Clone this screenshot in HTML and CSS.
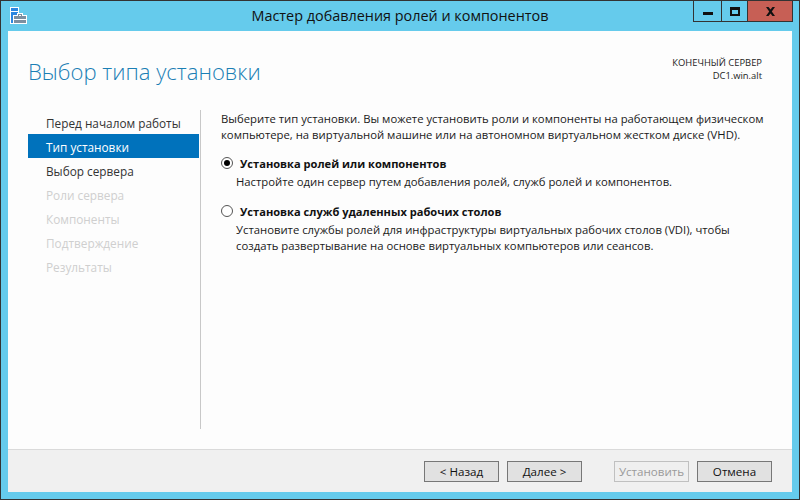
FILE: index.html
```html
<!DOCTYPE html>
<html lang="ru">
<head>
    <meta charset="UTF-8">
    <title>Мастер добавления ролей и компонентов</title>
    <link rel="stylesheet" href="styles.css">
</head>
<body>
    <div class="window">
        <div class="titlebar">
            <svg class="app-icon" width="17" height="17" viewBox="0 0 17 17">
                <rect x="0" y="0" width="9" height="17" fill="#fff"/>
                <rect x="1" y="1" width="7" height="3" fill="#2b86e0"/>
                <rect x="1" y="5" width="7" height="11" fill="#2b86e0"/>
                <rect x="3" y="8" width="14" height="9" fill="#fff"/>
                <rect x="7" y="6" width="6" height="3" fill="#fff"/>
                <rect x="8" y="7" width="4" height="2" fill="#7d8fa0"/>
                <rect x="9" y="8" width="2" height="1" fill="#fff"/>
                <rect x="4" y="9" width="12" height="7" fill="#7d8fa0"/>
                <rect x="4" y="12" width="12" height="1" fill="#fff"/>
            </svg>
            <div class="title">Мастер добавления ролей и компонентов</div>
            <div class="controls">
                <div class="ctl ctl-min"><span class="min-glyph"></span></div>
                <div class="ctl ctl-max"><span class="max-glyph"></span></div>
                <div class="ctl ctl-close">
                    <svg width="11" height="9" viewBox="0 0 11 9"><path d="M1 0h2.500L5.500 2.500 7.500 0H10L6.800 4.500 10 9H7.500L5.500 6.500 3.500 9H1L4.200 4.500Z" fill="#111"/></svg>
                </div>
            </div>
        </div>

        <div class="client">
            <div class="header">
                <h1>Выбор типа установки</h1>
                <div class="target">
                    <div>КОНЕЧНЫЙ СЕРВЕР</div>
                    <div>DC1.win.alt</div>
                </div>
            </div>

            <div class="main">
                <ul class="steps">
                    <li>Перед началом работы</li>
                    <li class="active">Тип установки</li>
                    <li>Выбор сервера</li>
                    <li class="disabled">Роли сервера</li>
                    <li class="disabled">Компоненты</li>
                    <li class="disabled">Подтверждение</li>
                    <li class="disabled">Результаты</li>
                </ul>
                <div class="content">
                    <p class="intro">Выберите тип установки. Вы можете установить роли и компоненты на работающем физическом<br>компьютере, на виртуальной машине или на автономном виртуальном жестком диске (VHD).</p>
                    <div class="option">
                        <div class="option-head"><span class="radio checked"></span><b>Установка ролей или компонентов</b></div>
                        <p>Настройте один сервер путем добавления ролей, служб ролей и компонентов.</p>
                    </div>
                    <div class="option">
                        <div class="option-head"><span class="radio"></span><b>Установка служб удаленных рабочих столов</b></div>
                        <p>Установите службы ролей для инфраструктуры виртуальных рабочих столов (VDI), чтобы<br>создать развертывание на основе виртуальных компьютеров или сеансов.</p>
                    </div>
                </div>
            </div>

            <div class="footer">
                <button>&lt; Назад</button>
                <button>Далее &gt;</button>
                <button class="install" disabled>Установить</button>
                <button>Отмена</button>
            </div>
        </div>
    </div>
</body>
</html>
```

FILE: styles.css
```css
* {
    margin: 0;
    padding: 0;
    box-sizing: border-box;
}

body {
    font-family: "Open Sans", "Noto Sans", sans-serif;
    font-size: 11.3px;
    color: #1a1a1a;
    width: 800px;
    height: 500px;
    overflow: hidden;
}

.window {
    width: 800px;
    height: 500px;
    background-color: #65cbec;
    border: 1px solid #333;
    padding: 0 7px 7px;
    display: flex;
    flex-direction: column;
}

.titlebar {
    height: 30px;
    display: flex;
    position: relative;
    flex-shrink: 0;
}

.app-icon {
    margin: 6px 0 0 2px;
}

.title {
    position: absolute;
    left: 0;
    right: 0;
    top: 5px;
    text-align: center;
    font-size: 14.4px;
    line-height: 20px;
    color: #111;
}

.controls {
    position: absolute;
    top: 0;
    right: -1px;
    display: flex;
    height: 21px;
    border: 1px solid #333;
    border-top: none;
}

.ctl {
    display: flex;
    align-items: center;
    justify-content: center;
    height: 20px;
    border-right: 1px solid #333;
}

.ctl-min {
    width: 28px;
}

.ctl-max {
    width: 26px;
}

.ctl-close {
    width: 44px;
    background-color: #c75f55;
    border-right: none;
}

.min-glyph {
    display: block;
    width: 10px;
    height: 3px;
    margin-top: 5px;
    background-color: #111;
}

.max-glyph {
    display: block;
    width: 10px;
    height: 9px;
    border: 2px solid #111;
    border-top-width: 3px;
}

.client {
    flex: 1;
    background-color: #fdfdfd;
    display: flex;
    flex-direction: column;
    min-height: 0;
}

.header {
    height: 79px;
    display: flex;
    justify-content: space-between;
    flex-shrink: 0;
}

h1 {
    font-size: 22.1px;
    font-weight: 300;
    color: #1b7fb5;
    padding: 23px 0 0 20px;
    line-height: 34px;
}

.target {
    padding: 25px 30px 0 0;
    font-size: 9.4px;
    line-height: 13px;
    text-align: right;
    color: #222;
}

.main {
    flex: 1;
    display: flex;
    min-height: 0;
    padding-bottom: 20px;
}

.steps {
    list-style: none;
    padding-left: 20px;
    flex-shrink: 0;
    box-sizing: content-box;
    width: 171px;
}

.steps li {
    height: 24px;
    line-height: 27px;
    padding-left: 18px;
    font-size: 11.8px;
    color: #333;
}

.steps li.active {
    background-color: #0072bc;
    color: #fff;
}

.steps li.disabled {
    color: #cfcfcf;
}

.content {
    flex: 1;
    margin-left: 1px;
    border-left: 1px solid #c8c8c8;
    padding-left: 20px;
}

.intro {
    line-height: 16px;
    margin-top: 1px;
    color: #1a1a1a;
}

.option {
    margin-top: 12px;
}

.option + .option {
    margin-top: 13px;
}

.option-head {
    display: flex;
    align-items: center;
    height: 16px;
    margin-bottom: 3px;
    font-size: 11.1px;
    color: #111;
}

.radio {
    width: 12px;
    height: 12px;
    border: 1px solid #555;
    border-radius: 50%;
    background-color: #fff;
    margin-right: 7px;
    flex-shrink: 0;
    display: flex;
    align-items: center;
    justify-content: center;
}

.radio.checked::after {
    content: "";
    width: 6px;
    height: 6px;
    border-radius: 50%;
    background-color: #000;
}

.option p {
    margin-left: 15px;
    line-height: 16px;
}

.footer {
    height: 43px;
    flex-shrink: 0;
    background-color: #f0f0f0;
    border-top: 1px solid #dadada;
    display: flex;
    align-items: flex-start;
    padding: 11px 20px 0 416px;
    gap: 8px;
}

button {
    width: 75px;
    height: 21px;
    background-color: #e1e1e1;
    border: 1px solid #777;
    font-family: inherit;
    font-size: 11.6px;
    color: #111;
}

button.install {
    margin-left: 24px;
    background-color: #efefef;
    border-color: #c0c0c0;
    color: #9a9a9a;
}
```
